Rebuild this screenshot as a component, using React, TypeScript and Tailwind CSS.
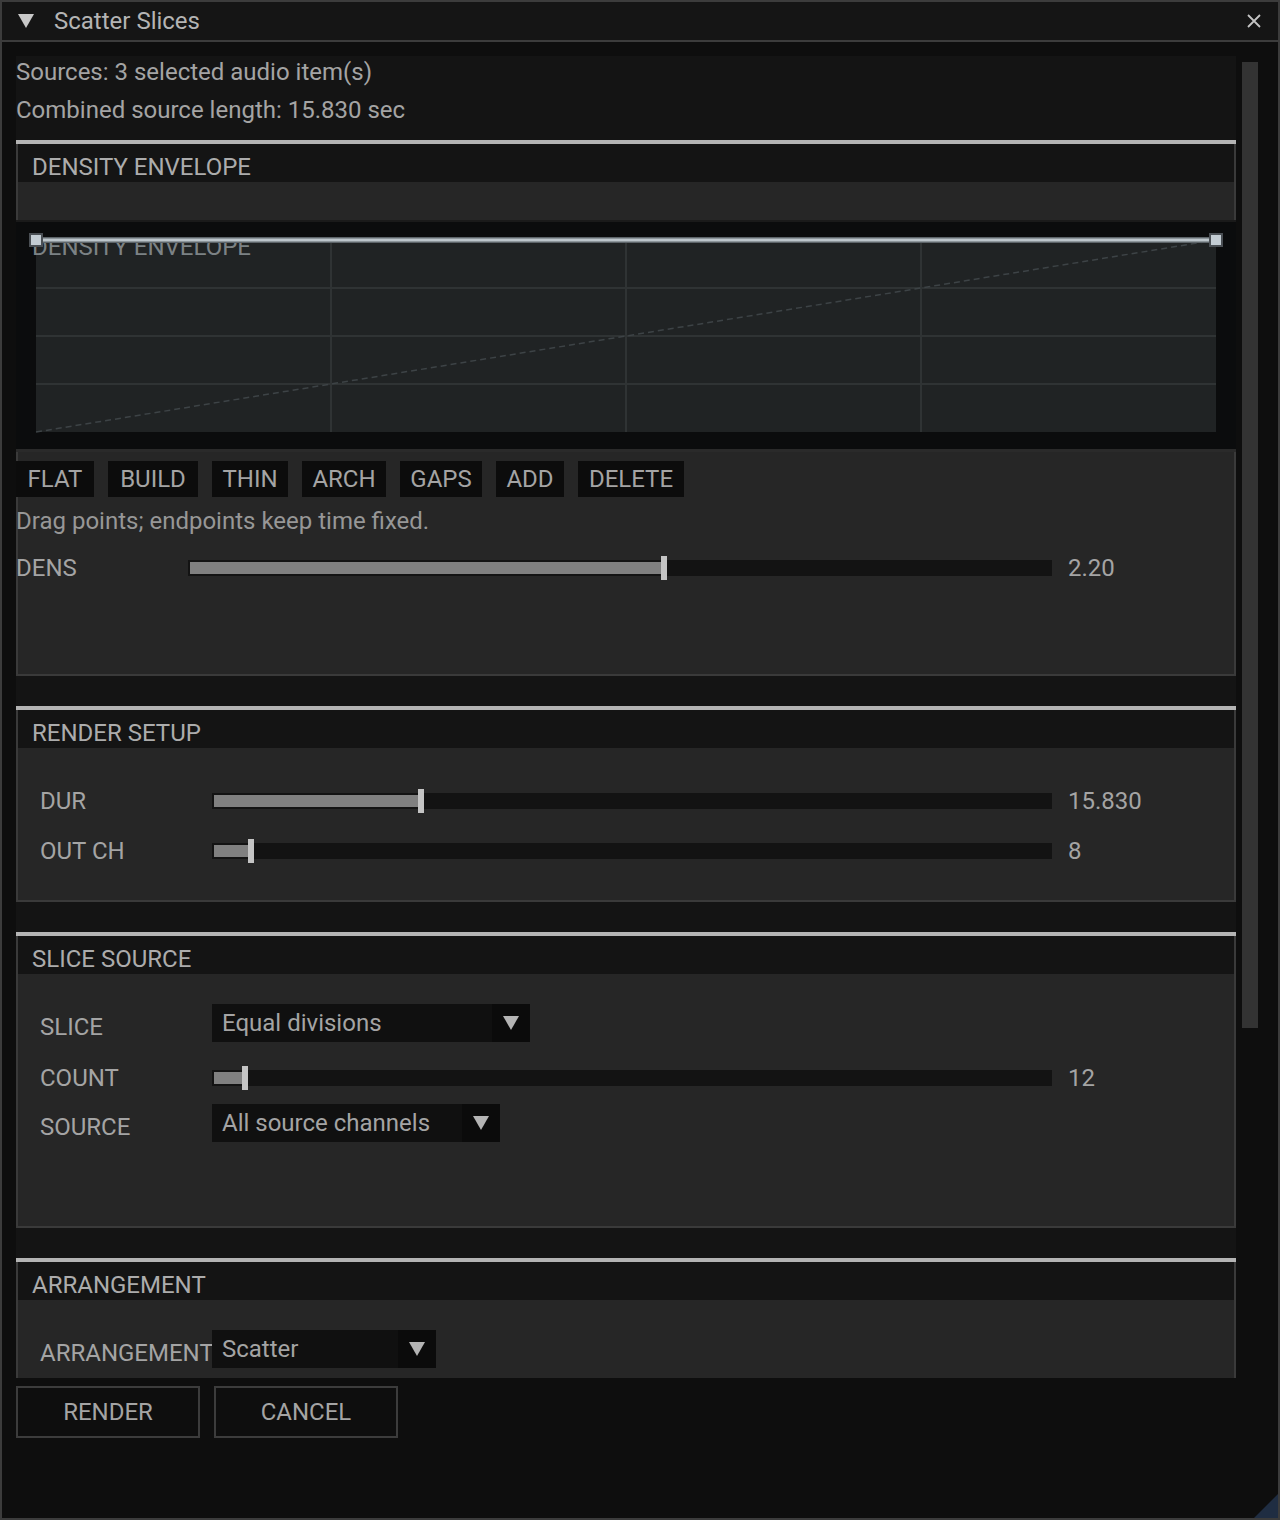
import React from "react";

const TXT = "text-[#a4a4a4]";

function SectionTop({ title }: { title: string }) {
  return (
    <>
      <div className="h-[4px] bg-[#b4b4b4]" />
      <div className="h-[38px] bg-[#141414] border-x-2 border-[#3a3a3a] pl-[14px] pt-[8px] flex items-center">
        <span className="text-[#acacac] leading-none">{title}</span>
      </div>
    </>
  );
}

function Slider({ handle, value }: { handle: number; value: string }) {
  return (
    <>
      <div className="relative flex-1 h-[16px] bg-[#131313]">
        <div className="absolute left-[2px] top-[2px] bottom-[2px] bg-[#808080]" style={{ width: handle - 2 }} />
        <div className="absolute top-[-4px] w-[6px] h-[24px] bg-[#c4c4c4]" style={{ left: handle }} />
      </div>
      <div className={`w-[182px] pl-[16px] ${TXT} leading-none`}>{value}</div>
    </>
  );
}

function Dropdown({ text, w }: { text: string; w: string }) {
  return (
    <div className={`${w} h-[38px] bg-[#101010] flex items-stretch`}>
      <div className={`flex-1 pl-[10px] flex items-center ${TXT} whitespace-nowrap leading-none`}>{text}</div>
      <div className="w-[38px] bg-[#0b0b0b] flex items-center justify-center">
        <svg width="16" height="14" viewBox="0 0 16 14"><path d="M0 0 H16 L8 14 Z" fill="#b4b4b4" /></svg>
      </div>
    </div>
  );
}

function Label({ children, drop }: { children: React.ReactNode; drop?: boolean }) {
  return (
    <div className={`w-[172px] shrink-0 whitespace-nowrap ${TXT} leading-none ${drop ? "pt-[8px]" : ""}`}>{children}</div>
  );
}

const envButtons: [string, string][] = [
  ["FLAT", "w-[78px]"],
  ["BUILD", "w-[90px]"],
  ["THIN", "w-[76px]"],
  ["ARCH", "w-[84px]"],
  ["GAPS", "w-[82px]"],
  ["ADD", "w-[68px]"],
  ["DELETE", "w-[106px]"],
];

export default function App() {
  const grid = [0.25, 0.5, 0.75];
  return (
    <div className="w-[1280px] h-[1520px] bg-[#0e0e0e] border-2 border-[#3c3c3c] flex flex-col relative font-['Roboto','Inter',sans-serif] text-[24px] overflow-hidden">
      {/* Title bar */}
      <div className="h-[40px] shrink-0 bg-[#151515] border-b-2 border-[#3c3c3c] flex items-center pl-[16px] pr-[16px]">
        <svg width="16" height="14" viewBox="0 0 16 14" className="mr-[20px]"><path d="M0 0 H16 L8 14 Z" fill="#c8c8c8" /></svg>
        <span className="text-[#b4b4b4] leading-none flex-1">Scatter Slices</span>
        <svg width="16" height="16" viewBox="0 0 16 16"><path d="M2 2 L14 14 M14 2 L2 14" stroke="#c4c4c4" strokeWidth="1.8" /></svg>
      </div>

      {/* Body */}
      <div className="flex-1 relative pl-[14px] pt-[14px]">
        <div className="w-[1220px] h-[1322px] bg-[#141414] overflow-hidden flex flex-col">
          <div className="flex flex-col gap-[6px]">
            <div className={`leading-[32px] ${TXT}`}>Sources: 3 selected audio item(s)</div>
            <div className={`leading-[32px] ${TXT}`}>Combined source length: 15.830 sec</div>
          </div>

          {/* DENSITY ENVELOPE */}
          <div className="mt-[14px] shrink-0">
            <SectionTop title="DENSITY ENVELOPE" />
            <div className="h-[38px] bg-[#262626] border-x-2 border-[#3a3a3a]" />
            <div className="h-[232px] bg-[#0b0c0d] border-t-2 border-[#1a1a1a] border-b-[3px] border-b-[#2a2a2a] pt-[18px] px-[20px] relative">
              <div className="relative h-[192px] bg-[#202324]">
                <svg className="absolute inset-0 overflow-visible" width="1180" height="192">
                  {grid.map((g) => (
                    <line key={"v" + g} x1={1180 * g} y1={0} x2={1180 * g} y2={192} stroke="#2f3334" strokeWidth="2" />
                  ))}
                  {grid.map((g) => (
                    <line key={"h" + g} x1={0} y1={192 * g} x2={1180} y2={192 * g} stroke="#2f3334" strokeWidth="2" />
                  ))}
                  <line x1={0} y1={192} x2={1180} y2={0} stroke="#3d4346" strokeWidth="1.5" strokeDasharray="6 4" />
                </svg>
                <div className="absolute left-[-4px] top-[-6px] text-[#7c8285] leading-[26px]">DENSITY ENVELOPE</div>
                <svg className="absolute inset-0 overflow-visible" width="1180" height="192">
                  <line x1={0} y1={0} x2={1180} y2={0} stroke="#5d6469" strokeWidth="6" />
                  <line x1={0} y1={0} x2={1180} y2={0} stroke="#bcc5cb" strokeWidth="3" />
                  <rect x={-6} y={-6} width={12} height={12} fill="#c3ccd3" stroke="#4a4f54" strokeWidth="2" />
                  <rect x={1174} y={-6} width={12} height={12} fill="#c3ccd3" stroke="#4a4f54" strokeWidth="2" />
                </svg>
              </div>
            </div>
            <div className="h-[224px] bg-[#262626] border-x-2 border-b-2 border-[#3a3a3a] pt-[9px]">
              <div className="-ml-[2px]">
                <div className="flex gap-[14px]">
                  {envButtons.map(([b, w]) => (
                    <div key={b} className={`${w} h-[36px] bg-[#0c0c0c] flex items-center justify-center ${TXT} leading-none`}>{b}</div>
                  ))}
                </div>
                <div className="mt-[8px] leading-[32px] text-[#979797]">Drag points; endpoints keep time fixed.</div>
                <div className="mt-[15px] h-[32px] flex items-center">
                  <div className={`w-[172px] shrink-0 ${TXT} leading-none`}>DENS</div>
                  <Slider handle={473} value="2.20" />
                </div>
              </div>
            </div>
          </div>

          {/* RENDER SETUP */}
          <div className="mt-[30px] shrink-0">
            <SectionTop title="RENDER SETUP" />
            <div className="h-[154px] bg-[#262626] border-x-2 border-b-2 border-[#3a3a3a] pt-[28px] pl-[22px]">
              <div className="h-[50px] flex items-center">
                <Label>DUR</Label>
                <Slider handle={206} value="15.830" />
              </div>
              <div className="h-[50px] flex items-center">
                <Label>OUT CH</Label>
                <Slider handle={36} value="8" />
              </div>
            </div>
          </div>

          {/* SLICE SOURCE */}
          <div className="mt-[30px] shrink-0">
            <SectionTop title="SLICE SOURCE" />
            <div className="h-[254px] bg-[#262626] border-x-2 border-b-2 border-[#3a3a3a] pt-[30px] pl-[22px]">
              <div className="h-[38px] flex items-center">
                <Label drop>SLICE</Label>
                <Dropdown text="Equal divisions" w="w-[318px]" />
              </div>
              <div className="mt-[17px] h-[38px] flex items-center">
                <Label>COUNT</Label>
                <Slider handle={30} value="12" />
              </div>
              <div className="mt-[7px] h-[38px] flex items-center">
                <Label drop>SOURCE</Label>
                <Dropdown text="All source channels" w="w-[288px]" />
              </div>
            </div>
          </div>

          {/* ARRANGEMENT */}
          <div className="mt-[30px] shrink-0">
            <SectionTop title="ARRANGEMENT" />
            <div className="h-[200px] bg-[#262626] border-x-2 border-[#3a3a3a] pt-[30px] pl-[22px]">
              <div className="h-[38px] flex items-center">
                <Label drop>ARRANGEMENT</Label>
                <Dropdown text="Scatter" w="w-[224px]" />
              </div>
            </div>
          </div>
        </div>

        {/* Scrollbar */}
        <div className="absolute left-[1240px] top-[20px] w-[16px] h-[966px] bg-[#333333]" />

        {/* Bottom buttons */}
        <div className="mt-[8px] flex gap-[14px]">
          <div className={`w-[184px] h-[52px] border-2 border-[#3c3c3c] bg-[#0e0e0e] flex items-center justify-center ${TXT} leading-none`}>RENDER</div>
          <div className={`w-[184px] h-[52px] border-2 border-[#3c3c3c] bg-[#0e0e0e] flex items-center justify-center ${TXT} leading-none`}>CANCEL</div>
        </div>

        {/* Resize grip */}
        <svg className="absolute right-0 bottom-0" width="24" height="24" viewBox="0 0 24 24">
          <path d="M24 0 V24 H0 Z" fill="#1f2d42" />
        </svg>
      </div>
    </div>
  );
}
